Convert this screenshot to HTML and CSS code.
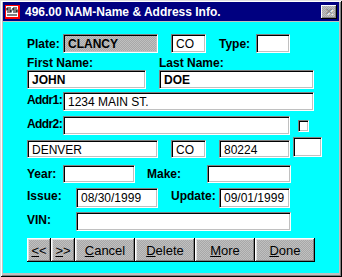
FILE: index.html
```html
<!DOCTYPE html>
<html lang="en">
<head>
    <meta charset="UTF-8">
    <title>NAM-Name &amp; Address Info.</title>
    <link rel="stylesheet" href="styles.css">
</head>
<body>
    <div class="window">
        <!-- Title bar -->
        <div class="title-bar">
            <svg class="title-icon" width="15" height="14" viewBox="0 0 15 14">
                <rect x="0" y="0" width="15" height="14" fill="#ff0000"/>
                <rect x="1" y="1" width="12" height="11" fill="#ffffff"/>
                <path d="M2 3h4M2 3v2h4v2H2M8 3h4M8 3v2h4v2H8M2 10h10" stroke="#000" stroke-width="1.2" fill="none"/>
            </svg>
            <span class="title-text">496.00 NAM-Name &amp; Address Info.</span>
            <span class="close-btn">&#x2715;</span>
        </div>

        <!-- Form -->
        <div class="content">
            <div class="row r1">
                <span class="lbl w36">Plate:</span>
                <span class="fld gray bold w95">CLANCY</span>
                <span class="fld w35 ml13">CO</span>
                <span class="lbl w37 ml13">Type:</span>
                <span class="fld w34"></span>
            </div>
            <div class="row r2">
                <span class="lbl w132">First Name:</span>
                <span class="lbl">Last Name:</span>
            </div>
            <div class="row r3">
                <span class="fld bold w119">JOHN</span>
                <span class="fld bold w155 ml13">DOE</span>
            </div>
            <div class="row r4">
                <span class="lbl w36 up tight">Addr1:</span>
                <span class="fld w251">1234 MAIN ST.</span>
            </div>
            <div class="row r5">
                <span class="lbl w36 up tight">Addr2:</span>
                <span class="fld w227"></span>
                <span class="check"></span>
            </div>
            <div class="row r6">
                <span class="fld w131 h18">DENVER</span>
                <span class="fld w35 ml13 h18">CO</span>
                <span class="fld w71 ml13 h18">80224</span>
                <span class="fld w29 ml3 box"></span>
            </div>
            <div class="row r7">
                <span class="lbl w36">Year:</span>
                <span class="fld w72"></span>
                <span class="lbl w60 ml12">Make:</span>
                <span class="fld w84"></span>
            </div>
            <div class="row r8">
                <span class="lbl w49 up">Issue:</span>
                <span class="fld w82">08/30/1999</span>
                <span class="lbl w48 ml13 up">Update:</span>
                <span class="fld w71">09/01/1999</span>
            </div>
            <div class="row r9">
                <span class="lbl w49 up">VIN:</span>
                <span class="fld w215"></span>
            </div>
            <div class="row r10">
                <button class="btn w24"><u>&lt;</u>&lt;</button>
                <button class="btn w24"><u>&gt;</u>&gt;</button>
                <button class="btn w60"><u>C</u>ancel</button>
                <button class="btn w60"><u>D</u>elete</button>
                <button class="btn w60"><u>M</u>ore</button>
                <button class="btn w60"><u>D</u>one</button>
            </div>
        </div>
    </div>
</body>
</html>
```

FILE: styles.css
```css
/* Base */
* {
    margin: 0;
    padding: 0;
    box-sizing: border-box;
}

body {
    font-family: "Liberation Sans", Arial, sans-serif;
    font-size: 12px;
    color: #000000;
    background: #c0c0c0;
}

/* Window frame */
.window {
    width: 342px;
    height: 277px;
    background: #c0c0c0;
    padding: 2px 3px 4px 3px;
    box-shadow: inset 1px 1px #dfdfdf, inset -1px -1px #000000, inset 2px 2px #ffffff, inset -2px -2px #808080;
}

.title-bar {
    height: 19px;
    background: #000080;
    color: #ffffff;
    display: flex;
    align-items: center;
    padding-left: 2px;
}

.title-icon {
    margin-right: 5px;
}

.title-text {
    font-weight: 700;
    font-size: 12px;
    flex: 1;
}

.close-btn {
    width: 16px;
    height: 14px;
    margin-right: 2px;
    background: repeating-conic-gradient(#c0c0c0 0 25%, #a8a8a8 0 50%) 0 0 / 2px 2px;
    box-shadow: inset -1px -1px #000000, inset 1px 1px #ffffff, inset -2px -2px #808080;
    color: #808080;
    font-size: 10px;
    line-height: 14px;
    text-align: center;
    text-shadow: 1px 1px #ffffff;
}

.content {
    height: 251px;
    margin-top: 1px;
    background: #00ffff;
    padding-left: 24px;
    padding-top: 12px;
}

/* Rows */
.row {
    display: flex;
    align-items: center;
}
.r1 { height: 19px; }
.r2 { height: 12px; margin-top: 4px; }
.r3 { height: 19px; margin-top: 1px; }
.r4 { height: 19px; margin-top: 3px; }
.r5 { height: 19px; margin-top: 5px; }
.r6 { height: 20px; margin-top: 4px; }
.r7 { height: 18px; margin-top: 6px; }
.r8 { height: 20px; margin-top: 5px; }
.r9 { height: 19px; margin-top: 4px; }
.r10 { height: 24px; margin-top: 7px; }

/* Labels */
.lbl {
    font-weight: 700;
    font-size: 12px;
    white-space: nowrap;
    flex-shrink: 0;
}
.up { margin-bottom: 4px; }
.tight { letter-spacing: -0.6px; }

/* Text fields */
.fld {
    height: 100%;
    flex-shrink: 0;
    background: #ffffff;
    border: 1px solid;
    border-color: #808080 #ffffff #ffffff #808080;
    box-shadow: inset 1px 1px #000000, inset -1px -1px #c0c0c0;
    padding: 3px 0 0 4px;
    font-size: 12px;
    line-height: 13px;
    white-space: nowrap;
    overflow: hidden;
}
.fld.h18 { height: 18px; }
.fld.box { height: 20px; align-self: flex-start; margin-top: -2px; }
.gray {
    background: repeating-conic-gradient(#c0c0c0 0 25%, #a8a8a8 0 50%) 0 0 / 2px 2px;
}
.bold { font-weight: 700; }

.check {
    width: 11px;
    height: 12px;
    margin-left: 8px;
    background: #ffffff;
    border: 1px solid;
    border-color: #808080 #ffffff #ffffff #808080;
    box-shadow: inset 1px 1px #000000, inset -1px -1px #c0c0c0;
}

/* Buttons */
.btn {
    height: 24px;
    flex-shrink: 0;
    border: none;
    font-family: "Liberation Sans", Arial, sans-serif;
    font-size: 13px;
    color: #000000;
    background: repeating-conic-gradient(#c0c0c0 0 25%, #a8a8a8 0 50%) 0 0 / 2px 2px;
    box-shadow: inset -1px -1px #000000, inset 1px 1px #ffffff, inset -2px -2px #808080, inset 2px 2px #dfdfdf;
}

/* Widths and spacing */
.w24 { width: 24px; }
.w29 { width: 29px; }
.w34 { width: 34px; }
.w35 { width: 35px; }
.w36 { width: 36px; }
.w37 { width: 37px; }
.w48 { width: 48px; }
.w49 { width: 49px; }
.w60 { width: 60px; }
.w71 { width: 71px; }
.w72 { width: 72px; }
.w82 { width: 82px; }
.w84 { width: 84px; }
.w95 { width: 95px; }
.w119 { width: 119px; }
.w131 { width: 131px; }
.w132 { width: 132px; }
.w155 { width: 155px; }
.w215 { width: 215px; }
.w227 { width: 227px; }
.w251 { width: 251px; }
.ml3 { margin-left: 3px; }
.ml12 { margin-left: 12px; }
.ml13 { margin-left: 13px; }
```
